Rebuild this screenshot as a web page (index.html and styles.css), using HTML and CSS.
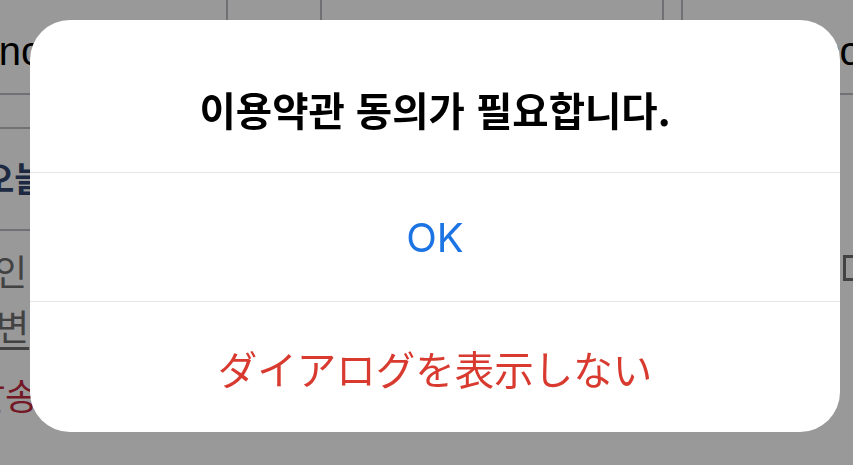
FILE: index.html
```html
<!DOCTYPE html>
<html lang="ko">
  <head>
    <meta charset="UTF-8" />
    <meta name="viewport" content="width=device-width, initial-scale=1.0" />
    <title>이용약관</title>
    <link rel="stylesheet" href="styles.css">
  </head>
  <body>
    <!-- Page behind the dialog -->
    <div class="page">
      <div class="fields">
        <div class="field field-name">Sync</div>
        <div class="field field-mid"></div>
        <div class="field field-mail">mail.com</div>
      </div>
      <div class="rule"></div>
      <div class="section-title">오늘</div>
      <div class="rule"></div>
      <div class="row">
        <div class="row-text">인</div>
        <div class="check"></div>
      </div>
      <div class="row-text link">변</div>
      <div class="row-text danger">발송</div>
    </div>

    <!-- Alert dialog -->
    <div class="overlay">
      <div class="dialog">
        <div class="dialog-title">이용약관 동의가 필요합니다.</div>
        <button class="dialog-btn ok">OK</button>
        <button class="dialog-btn dismiss" lang="ja">ダイアログを表示しない</button>
      </div>
    </div>
  </body>
</html>
```

FILE: styles.css
```css
/* General Styles */
html,
body {
  margin: 0;
  padding: 0;
  width: 853px;
  height: 465px;
  overflow: hidden;
  background: #ffffff;
  font-family: "Noto Sans CJK KR", "Noto Sans", sans-serif;
}

/* Background page */
.page {
  display: flex;
  flex-direction: column;
  overflow: hidden;
}

.fields {
  display: flex;
  margin-top: -12px;
  height: 107px;
}

.field {
  flex-shrink: 0;
  box-sizing: border-box;
  border: 2px solid #b9bdc3;
  border-radius: 10px;
  font-family: "Liberation Sans", sans-serif;
  font-size: 40px;
  color: #000;
  padding-top: 41px;
  line-height: 40px;
  white-space: nowrap;
  overflow: hidden;
}

.field-name {
  width: 270px;
  margin-left: -42px;
  text-indent: -8px;
}

.field-mid {
  width: 344px;
  margin-left: 92px;
}

.field-mail {
  width: 300px;
  margin-left: 17px;
  padding-left: 52px;
}

.rule {
  flex-shrink: 0;
  width: 200px;
  height: 2px;
  background: #b9bdc3;
}

.fields + .rule {
  margin-top: 32px;
}

.section-title {
  font-size: 34px;
  font-weight: bold;
  color: #32466e;
  margin: 24px 0 26px -17px;
  line-height: 50px;
}

.row {
  display: flex;
  justify-content: space-between;
  align-items: center;
  margin-top: 12px;
}

.row-text {
  font-size: 36px;
  color: #6e6e6e;
  line-height: 55px;
  margin-left: -6px;
}

.check {
  width: 12px;
  height: 20px;
  border: 3px solid #6e6e6e;
  margin-right: -8px;
  margin-top: -6px;
}

.link {
  text-decoration: underline;
  text-underline-offset: 6px;
  margin-left: -4px;
}

.danger {
  color: #c0283c;
  margin-top: 14px;
  margin-left: -28px;
}

/* Dialog overlay */
.overlay {
  position: fixed;
  top: 0;
  left: 0;
  width: 100%;
  height: 100%;
  background-color: rgba(0, 0, 0, 0.4);
  display: flex;
  align-items: flex-start;
  padding: 20px 0 0 30px;
  box-sizing: border-box;
}

.dialog {
  width: 810px;
  background: #ffffff;
  border-radius: 40px;
  display: flex;
  flex-direction: column;
  overflow: hidden;
}

.dialog-title {
  height: 153px;
  box-sizing: border-box;
  padding-top: 67px;
  line-height: 44px;
  text-align: center;
  font-size: 39.5px;
  font-weight: bold;
  color: #000;
  border-bottom: 1px solid #e6e6e6;
}

.dialog-btn {
  border: none;
  background: none;
  margin: 0;
  padding: 0;
  height: 129px;
  font-size: 40px;
  cursor: pointer;
}

.dialog-btn.ok {
  font-family: "Inter", "Liberation Sans", sans-serif;
  color: #1c74e4;
  border-bottom: 1px solid #e6e6e6;
}

.dialog-btn.dismiss {
  height: 130px;
  font-family: "Noto Sans CJK JP", sans-serif;
  font-size: 39.5px;
  color: #d83a2f;
}
```
